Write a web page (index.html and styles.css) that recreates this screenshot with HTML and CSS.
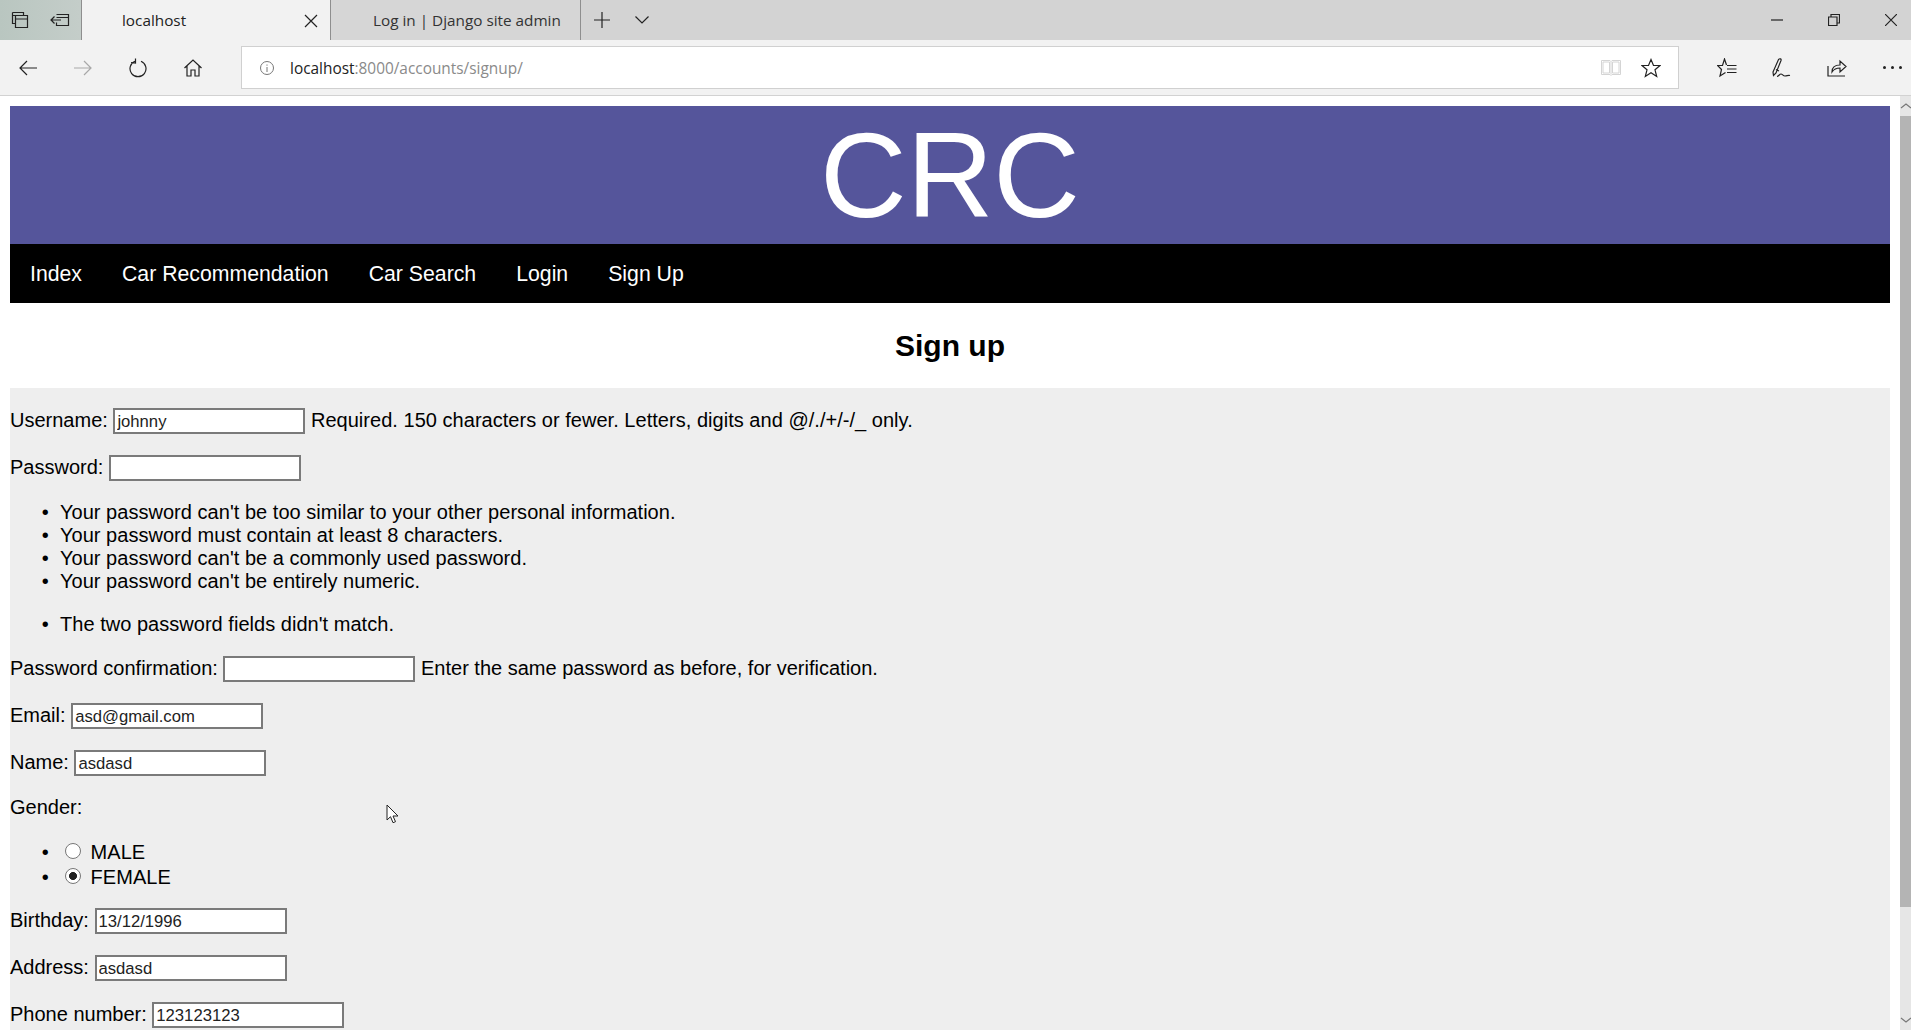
FILE: index.html
```html
<!DOCTYPE html>
<html lang="en">
<head>
  <meta charset="UTF-8" />
  <title>localhost</title>
  <link rel="stylesheet" href="styles.css">
</head>
<body>
  <div class="tabbar">
    <div class="tab-tools">
      <svg class="icon" width="20" height="20" viewBox="0 0 20 20"><path d="M2.500 2.500h11v3M2.500 2.500v11h3M2.500 5.500h11M5.500 5.500h12v12h-12zM5.500 9h12"/></svg>
      <svg class="icon" width="20" height="20" viewBox="0 0 20 20"><path d="M6.500 4.500h12v11h-12v-3M6.500 7.500h12M1 10h10M4.500 6.500L1 10l3.500 3.500"/></svg>
    </div>
    <div class="tab tab-active">
      <span>localhost</span>
      <svg class="icon tab-close" width="14" height="14" viewBox="0 0 14 14"><path d="M1 1l12 12M13 1L1 13"/></svg>
    </div>
    <div class="tab"><span>Log in | Django site admin</span></div>
    <div class="tab-btn"><svg class="icon" width="16" height="16" viewBox="0 0 16 16"><path d="M8 0v16M0 8h16"/></svg></div>
    <div class="tab-btn"><svg class="icon" width="14" height="8" viewBox="0 0 14 8"><path d="M.5.5L7 7 13.500.5"/></svg></div>
    <div class="win-controls">
      <div class="win-btn"><svg class="icon" width="12" height="2" viewBox="0 0 12 2"><path d="M0 1h12"/></svg></div>
      <div class="win-btn"><svg class="icon" width="12" height="12" viewBox="0 0 12 12"><path d="M.5 3h8.500v8.500H.5zM3 3V.5h8.500V9H9"/></svg></div>
      <div class="win-btn"><svg class="icon" width="12" height="12" viewBox="0 0 12 12"><path d="M0 0l12 12M12 0L0 12"/></svg></div>
    </div>
  </div>

  <div class="toolbar">
    <div class="nav-btn"><svg class="icon" width="18" height="16" viewBox="0 0 18 16"><path d="M18 8H1M8 1L1 8l7 7"/></svg></div>
    <div class="nav-btn nav-off"><svg class="icon" width="18" height="16" viewBox="0 0 18 16"><path d="M0 8h17M10 1l7 7-7 7"/></svg></div>
    <div class="nav-btn"><svg class="icon" width="18" height="20" viewBox="0 0 18 20"><path d="M6 3.300a8 8 0 1 0 6 0M6.500 .5L6.500 5 2 4.500"/></svg></div>
    <div class="nav-btn"><svg class="icon" width="18" height="18" viewBox="0 0 18 18"><path d="M.5 9L9 1l8.500 8M3 7v10h4v-6h4v6h4V7"/></svg></div>
    <div class="address">
      <svg class="icon addr-info" width="14" height="14" viewBox="0 0 14 14"><circle cx="7" cy="7" r="6.500"/><path d="M7 6v5M7 3.500v1.200"/></svg>
      <div class="addr-text"><span class="addr-host">localhost</span>:8000/accounts/signup/</div>
      <svg class="icon addr-book" width="20" height="18" viewBox="0 0 20 18"><path d="M.5 1.500h8.500l1 1 1-1h8.500v14H11l-1 1-1-1H.5zM10 2.500v13M2 3h6.500v11H2zM11.500 3H18v11h-6.500z"/></svg>
      <svg class="icon addr-star" width="20" height="20" viewBox="0 0 20 20"><path d="M10 1.500l2.500 6h6.500l-5 4.300 1.700 6.700L10 14.800l-5.700 3.700 1.700-6.700-5-4.300h6.500z"/></svg>
    </div>
    <div class="tool-group">
      <div class="tool-btn"><svg class="icon" width="20" height="20" viewBox="0 0 20 20"><path d="M9.500 7L7.500 1 5.500 7.500H.5l4 4L3 18l5.500-3.500M10 7.500h9.500M10 11h9.500M10 14.500h9.500"/></svg></div>
      <div class="tool-btn"><svg class="icon" width="20" height="20" viewBox="0 0 20 20"><path d="M6.500 1.500c1.500-1.500 3-.5 2.500 1L4 15l-2.500 2.500L1 14zM4 11.500l3 1.500M5 18.500c1.500 0 2.500-2.500 4-2.500s2 2 4 2 3-1 5-.5"/></svg></div>
      <div class="tool-btn"><svg class="icon" width="20" height="20" viewBox="0 0 20 20"><path d="M1 8v10h17M5 14c0-5 3-7 8-7V3l6 5.500-6 5.500v-4c-3 0-6 1-8 4z"/></svg></div>
      <div class="tool-btn tool-dots"><span></span><span></span><span></span></div>
    </div>
  </div>

  <div class="viewport">
    <div class="page">
      <div class="header">CRC</div>
      <ul class="nav">
        <li>Index</li>
        <li>Car Recommendation</li>
        <li>Car Search</li>
        <li>Login</li>
        <li>Sign Up</li>
      </ul>
      <h2 class="title">Sign up</h2>
      <form class="signup">
        <p><label>Username:</label> <input type="text" value="johnny"> <span class="hint-wide">Required. 150 characters or fewer. Letters, digits and @/./+/-/_ only.</span></p>
        <p><label>Password:</label> <input type="password"></p>
        <ul class="after-field">
          <li>Your password can't be too similar to your other personal information.</li>
          <li>Your password must contain at least 8 characters.</li>
          <li>Your password can't be a commonly used password.</li>
          <li>Your password can't be entirely numeric.</li>
        </ul>
        <ul>
          <li>The two password fields didn't match.</li>
        </ul>
        <p><label>Password confirmation:</label> <input type="password"> <span>Enter the same password as before, for verification.</span></p>
        <p><label>Email:</label> <input type="text" value="asd@gmail.com"></p>
        <p><label>Name:</label> <input type="text" value="asdasd"></p>
        <p class="after-field"><label>Gender:</label></p>
        <ul>
          <li><label><input type="radio" name="gender"> MALE</label></li>
          <li><label><input type="radio" name="gender" checked> FEMALE</label></li>
        </ul>
        <p class="after-field"><label>Birthday:</label> <input type="text" value="13/12/1996"></p>
        <p><label>Address:</label> <input type="text" value="asdasd"></p>
        <p><label>Phone number:</label> <input type="text" value="123123123"></p>
      </form>
      <svg class="cursor" width="13" height="20" viewBox="0 0 13 20"><path d="M1 1v15l3.500-3.300 2.500 6 2.500-1-2.500-5.700h5z"/></svg>
    </div>
    <div class="scrollbar">
      <div class="scroll-arrow"><svg width="11" height="8" viewBox="0 0 11 8"><path d="M1 6l5-4 5 4"/></svg></div>
      <div class="scroll-thumb"></div>
      <div class="scroll-track"></div>
      <div class="scroll-arrow"><svg width="11" height="8" viewBox="0 0 11 8"><path d="M1 2l5 4 5-4"/></svg></div>
    </div>
  </div>
</body>
</html>
```

FILE: styles.css
```css
* {
  box-sizing: border-box;
}
html, body {
  height: 100%;
}
body {
  margin: 0;
  display: flex;
  flex-direction: column;
  overflow: hidden;
  background: #fff;
  color: #000;
  font-family: 'Liberation Sans', Arial, sans-serif;
  font-size: 20px;
}
.icon {
  fill: none;
  stroke: #222;
  stroke-width: 1.2;
  flex: none;
}

/* browser chrome */
.tabbar {
  height: 40px;
  flex: none;
  display: flex;
  background: linear-gradient(90deg, #b9c6c0 0, #c4cdc9 80px, #d3d3d3 500px);
  font-family: 'Open Sans', sans-serif;
  font-size: 15.3px;
  color: #333;
}
.tab-tools {
  width: 81px;
  display: flex;
  align-items: center;
  justify-content: space-between;
  padding: 0 11px 0 10px;
}
.tab {
  width: 250px;
  display: flex;
  align-items: center;
  padding-left: 42px;
  background: #d6d6d6;
  border-left: 1px solid #8e8e8e;
  position: relative;
}
.tab-active {
  background: #f2f2f2;
  color: #222;
  border-right: 1px solid #8e8e8e;
  padding-left: 40px;
}
.tab-close {
  position: absolute;
  left: 222px;
  top: 14px;
}
.tab + .tab {
  border-left: none;
  border-right: 1px solid #8e8e8e;
}
.tab-btn {
  width: 40px;
  margin-left: 1px;
  display: flex;
  align-items: center;
  justify-content: center;
}
.tab-btn + .tab-btn {
  margin-left: 0;
}
.win-controls {
  margin-left: auto;
  display: flex;
  gap: 17px;
}
.win-btn {
  width: 40px;
  display: flex;
  align-items: center;
  justify-content: center;
}
.toolbar {
  height: 56px;
  flex: none;
  display: flex;
  align-items: center;
  background: #f2f2f2;
  border-bottom: 1px solid #d2d2d2;
}
.nav-btn {
  width: 55px;
  display: flex;
  justify-content: center;
}
.nav-off .icon {
  stroke: #a8a8a8;
}
.address {
  flex: 1;
  height: 43px;
  margin-left: 21px;
  margin-right: 29px;
  display: flex;
  align-items: center;
  background: #fff;
  border: 1px solid #d0d0d0;
  font-family: 'Open Sans', sans-serif;
  font-size: 15.4px;
  color: #8a8a8a;
}
.addr-info {
  margin-left: 18px;
  stroke: #777;
  stroke-width: 1;
}
.addr-text {
  margin-left: 16px;
  padding-top: 2px;
  flex: 1;
}
.addr-host {
  color: #222;
}
.addr-book {
  stroke: #d4d4d4;
  stroke-width: 1;
}
.addr-star {
  margin-left: 20px;
  margin-right: 17px;
}
.tool-group {
  display: flex;
  gap: 17px;
}
.tool-btn {
  width: 38px;
  display: flex;
  align-items: center;
  justify-content: center;
}
.tool-dots {
  gap: 5px;
}
.tool-dots span {
  width: 3px;
  height: 3px;
  border-radius: 50%;
  background: #222;
}

/* page */
.viewport {
  flex: 1;
  min-height: 0;
  display: flex;
}
.page {
  flex: 1;
  min-width: 0;
  padding: 10px;
  overflow: hidden;
  position: relative;
}
.header {
  background: #55559b;
  color: #fff;
  font-size: 120px;
  text-align: center;
}
.nav {
  margin: 0;
  padding: 0;
  list-style: none;
  display: flex;
  background: #000;
  color: #fff;
  font-size: 21.25px;
  line-height: 24px;
}
.nav li {
  padding: 18px 20px 17px;
}
.title {
  margin: 26px 0 25px;
  font-size: 30px;
  text-align: center;
}
.signup {
  background: #eee;
  display: flow-root;
}
.signup p, .signup ul {
  margin: 20px 0;
}
/* negative margin collapses with the 20px above */
.signup .after-field {
  margin-top: -1px;
}
.signup ul {
  padding-left: 50px;
  list-style-type: "\2022\00a0\00a0";
}
.signup li, .hint-wide {
  letter-spacing: .03px;
}
.signup input[type=text], .signup input[type=password] {
  width: 192px;
  height: 26px;
  margin-bottom: 1px;
  padding: 2px 2px 0;
  border: 2px solid #7a7a7a;
  background: #fff;
  color: #222;
  font-family: 'Liberation Sans', Arial, sans-serif;
  font-size: 16.67px;
}
.signup input[type=radio] {
  appearance: none;
  width: 16px;
  height: 16px;
  margin: 4px 4px 0 5px;
  border: 1.5px solid #777;
  border-radius: 50%;
  background: #fff;
}
.signup input[type=radio]:checked {
  background: radial-gradient(circle, #222 0 3.700px, #fff 4.200px);
}
.cursor {
  position: absolute;
  left: 386px;
  top: 708px;
  fill: #fff;
  stroke: #222;
  stroke-width: 1;
}

/* scrollbar */
.scrollbar {
  width: 11px;
  flex: none;
  display: flex;
  flex-direction: column;
  background: #e6e6e6;
}
.scroll-arrow {
  height: 20px;
  flex: none;
  display: flex;
  align-items: center;
  justify-content: center;
}
.scroll-arrow svg {
  fill: none;
  stroke: #777;
  stroke-width: 1.2;
}
.scroll-thumb {
  height: 791px;
  flex: none;
  background: #b4b4b4;
}
.scroll-track {
  flex: 1;
}
```
